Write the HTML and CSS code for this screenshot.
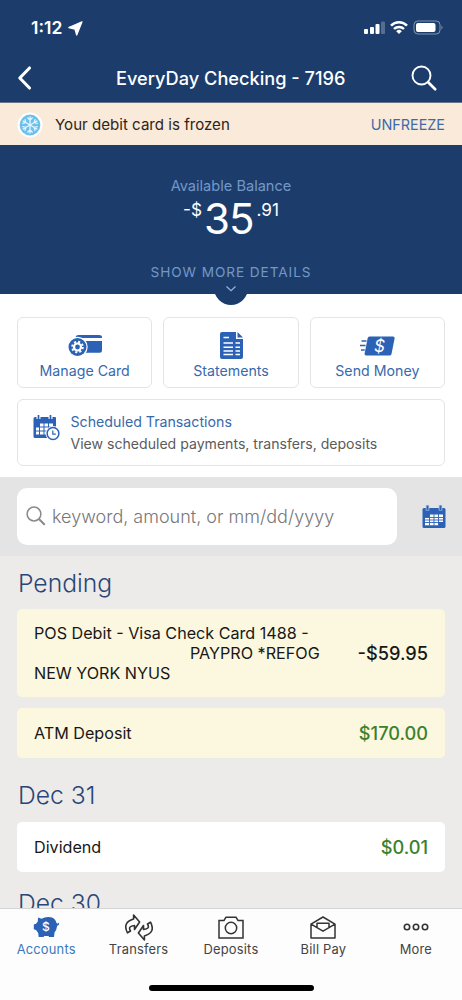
FILE: index.html
```html
<!DOCTYPE html>
<html lang="en">
<head>
<meta charset="utf-8">
<title>EveryDay Checking</title>
<link rel="stylesheet" href="styles.css">
</head>
<body>
<div class="screen">
  <header class="header">
    <div class="status">
      <span class="time">1:12</span>
      <svg class="locate" width="15" height="15" viewBox="0 0 15 15"><path d="M14 .8 8.700 14 7 8 .8 6.500Z" fill="#fff" stroke="#fff" stroke-width="1.300" stroke-linejoin="round"/></svg>
      <svg class="signals" width="82" height="16" viewBox="0 0 82 16">
        <g fill="#fff"><rect x="1" y="9" width="4" height="5" rx="1"/><rect x="7" y="7" width="4" height="7" rx="1"/><rect x="12.500" y="4" width="4" height="10" rx="1"/><rect x="18" y="1.500" width="4" height="12.500" rx="1" opacity=".25"/></g>
        <g fill="none" stroke="#fff" stroke-width="2.500"><path d="M28 5.600a11 11 0 0 1 16 0"/><path d="M31 9a7 7 0 0 1 10 0"/></g>
        <path d="M33.200 11.200a4 4 0 0 1 5.600 0L36 14Z" fill="#fff"/>
        <rect x="51" y="1" width="26" height="13" rx="3.800" fill="none" stroke="#fff" opacity=".45"/>
        <rect x="53" y="3" width="19.500" height="9" rx="2" fill="#fff"/>
        <path d="M78.500 5.500q2 2 0 4Z" fill="#fff" opacity=".5"/>
      </svg>
    </div>
    <div class="nav">
      <svg width="16" height="26" viewBox="0 0 16 26"><path d="M13.500 3 3.800 13 13.500 23" fill="none" stroke="#fff" stroke-width="3.100" stroke-linecap="round" stroke-linejoin="round"/></svg>
      <h1 class="title">EveryDay Checking - 7196</h1>
      <svg width="28" height="28" viewBox="0 0 28 28" fill="none" stroke="#fff" stroke-linecap="round"><circle cx="11.500" cy="11.500" r="9" stroke-width="1.900"/><path d="m18.200 18.200 7 7" stroke-width="2.700"/></svg>
    </div>
  </header>

  <div class="banner">
    <svg width="26" height="26" viewBox="0 0 26 26"><circle cx="13" cy="13" r="12.500" fill="#fff"/><circle cx="13" cy="13" r="10.400" fill="#6dbfec"/>
      <g stroke="#e6f6ff" stroke-width="1.300" stroke-linecap="round" fill="none">
        <g id="arm"><path d="M13 13V5M10.800 6 13 8.200l2.200-2.200"/></g>
        <use href="#arm" transform="rotate(60 13 13)"/><use href="#arm" transform="rotate(120 13 13)"/><use href="#arm" transform="rotate(180 13 13)"/><use href="#arm" transform="rotate(240 13 13)"/><use href="#arm" transform="rotate(300 13 13)"/>
      </g></svg>
    <span class="banner-text">Your debit card is frozen</span>
    <a class="unfreeze">UNFREEZE</a>
  </div>

  <section class="balance">
    <div class="notch"><svg width="12" height="8" viewBox="0 0 12 8"><path d="m1.500 1.500 4.500 4.200 4.500-4.200" fill="none" stroke="#8fb4e0" stroke-width="1.300"/></svg></div>
    <div class="balance-label">Available Balance</div>
    <div class="amount"><span class="minor sign">-$</span><span class="major">35</span><span class="minor">.91</span></div>
    <div class="more">SHOW MORE DETAILS</div>
  </section>

  <section class="actions">
    <div class="tiles">
      <div class="tile">
        <svg width="34" height="24" viewBox="0 0 34 24"><path d="M7.500 3.200Q8 1 10.500 1H31q3 0 3 2.200V4H7.500ZM7.500 7H34v9.500q0 2.200-2.200 2.200H14Z" fill="#2b62b5"/><circle cx="9.500" cy="13" r="10.200" fill="#fff"/><circle cx="9.500" cy="13" r="9" fill="#2b62b5"/><circle cx="9.500" cy="13" r="3.500" fill="none" stroke="#fff" stroke-width="2.200"/><circle cx="9.500" cy="13" r="5.300" fill="none" stroke="#fff" stroke-width="2" stroke-dasharray="2.080 2.080"/></svg>
        <span class="tile-label">Manage Card</span>
      </div>
      <div class="tile">
        <svg class="sheet" width="23" height="27" viewBox="0 0 23 27"><path d="M2 0h14v7h7v18q0 2-2 2H2q-2 0-2-2V2Q0 0 2 0ZM17.500 0 23 5.500h-5.500Z" fill="#2b62b5"/><path d="M3.500 5.500H9M3.500 11H13M3.500 15.200H13M3.500 19H13M3.500 22.500H13M15.500 11H20M15.500 15.200H20M15.500 19H20M15.500 22.500H20" stroke="#fff" stroke-width="1.500"/></svg>
        <span class="tile-label">Statements</span>
      </div>
      <div class="tile">
        <svg width="35" height="20" viewBox="0 0 35 20"><path d="M9.500.5H33q2 0 1.600 2L31.500 18q-.4 1.500-2 1.500H6.200q-2 0-1.600-2L7.700 2q.4-1.500 1.800-1.500Z" fill="#2b62b5"/><path d="M1.500 5h5M0 9.500h5.500M1 14h3.700" stroke="#2b62b5" stroke-width="1.500"/><text class="cash" x="19.500" y="15.500" text-anchor="middle">$</text></svg>
        <span class="tile-label">Send Money</span>
      </div>
    </div>
    <div class="scheduled">
      <svg width="28" height="28" viewBox="0 0 28 28"><path d="M2 3h20q1 0 1 1v9a8 8 0 0 0-8 11H2q-1.500 0-1.500-1.500V4.500Q.5 3 2 3Z" fill="#2b62b5"/><path d="M5.500 0v5M17.500 0v5" stroke="#fff" stroke-width="4"/><path d="M5.500 1v4M17.500 1v4" stroke="#2b62b5" stroke-width="1.700"/><path d="M6.500 9.500H20V13h-3l-2 3v4.500H3V13h3.500Z" fill="#fff"/><path d="M6.500 9v12M11 9v12M15.500 9v7M2.500 13H20M2.500 17H15" stroke="#2b62b5" stroke-width="1"/><circle cx="20" cy="19.500" r="7.500" fill="#fff"/><circle cx="20" cy="19.500" r="5.900" fill="none" stroke="#2b62b5" stroke-width="1.500"/><path d="M19.800 16.500v3.700h3" fill="none" stroke="#2b62b5" stroke-width="1.200"/></svg>
      <div class="scheduled-copy"><div class="scheduled-title">Scheduled Transactions</div><div class="scheduled-sub">View scheduled payments, transfers, deposits</div></div>
    </div>
  </section>

  <section class="search">
    <div class="field">
      <svg width="20" height="20" viewBox="0 0 20 20" fill="none" stroke="#8a8a8c" stroke-linecap="round"><circle cx="8" cy="8" r="6.900" stroke-width="1.500"/><path d="m13.200 13.200 5 5" stroke-width="2"/></svg>
      <span class="placeholder">keyword, amount, or mm/dd/yyyy</span>
    </div>
    <svg class="calendar" width="24" height="24" viewBox="0 0 24 24"><path d="M2 3h20q1.500 0 1.500 1.500v17q0 1.500-1.500 1.500H2Q.5 23 .5 21.500v-17Q.5 3 2 3Z" fill="#2b62b5"/><path d="M5.500 0v5.500M18.500 0v5.500" stroke="#b9cbe6" stroke-width="3.600"/><path d="M5.500.5V5M18.500.5V5" stroke="#2b62b5" stroke-width="2"/><path d="M7.500 9.500H21v7.500h-4.500v3.200H3V12.500h4.500Z" fill="#fff"/><path d="M7.500 9v11.500M12 9v11.500M16.500 9v11.500M3 12.500h18M3 15h18M3 17.500h14" stroke="#2b62b5" stroke-width=".9"/></svg>
  </section>

  <main class="list">
    <h2 class="date">Pending</h2>
    <div class="row pending tall"><div class="desc">POS Debit - Visa Check Card 1488 -<br><span class="payee">PAYPRO *REFOG</span><br>NEW YORK NYUS</div><span class="value">-$59.95</span></div>
    <div class="row pending"><div class="desc">ATM Deposit</div><span class="value credit">$170.00</span></div>
    <h2 class="date later">Dec 31</h2>
    <div class="row"><div class="desc">Dividend</div><span class="value credit">$0.01</span></div>
    <h2 class="date last">Dec 30</h2>
  </main>

  <footer class="tabs">
    <nav class="tab-row">
      <div class="tab active">
        <svg width="27" height="22" viewBox="0 0 27 22"><path d="M5 1.500 8.500 2.800Q13 .2 18 1.300q4.500 1.200 5.500 5.700l1.300.8 1.200-1.200q.8 2.400-1.800 3.200Q23.500 14.500 21.500 16.500l-.5 4.500h-5l-.5-1H11L10.700 21h-5l-.5-4L3 14 .8 13.200V8.500L3 7.700l1.800-2.200Z" fill="#2b62b5"/><text class="pig-mark" x="13" y="14.500" text-anchor="middle">$</text></svg>
        <span>Accounts</span>
      </div>
      <div class="tab">
        <svg width="28" height="27" viewBox="0 0 28 27" fill="none" stroke="#333" stroke-width="1.600" stroke-linejoin="round"><path id="swap" d="M2.500 18.800Q-3 8.500 8.600 5V1L14.600 8 9.500 15.500V11.500Q2.500 12 5.500 17Z"/><use href="#swap" transform="rotate(180 14 13.500)"/></svg>
        <span>Transfers</span>
      </div>
      <div class="tab">
        <svg width="26" height="23" viewBox="0 0 26 23" fill="none" stroke="#333" stroke-width="1.500"><path d="M1 4.500h5L8 1.200h10l2 3.300h5V22H1Z"/><circle cx="13" cy="12" r="5.700"/></svg>
        <span>Deposits</span>
      </div>
      <div class="tab">
        <svg width="26" height="23" viewBox="0 0 26 23" fill="none" stroke="#333" stroke-width="1.500" stroke-linejoin="round"><path d="M1 8.200 13 1l12 7.200V22H1ZM1 8.200l12 7 12-7M7 11.500V7.200h12v4.300"/></svg>
        <span>Bill Pay</span>
      </div>
      <div class="tab">
        <svg width="26" height="8" viewBox="0 0 26 8" fill="none" stroke="#333" stroke-width="1.600"><circle cx="4" cy="4" r="2.700"/><circle cx="13" cy="4" r="2.700"/><circle cx="22" cy="4" r="2.700"/></svg>
        <span>More</span>
      </div>
    </nav>
    <div class="home"></div>
  </footer>
</div>
</body>
</html>
```
FILE: styles.css
```css
* { box-sizing: border-box; }
body { margin: 0; font-family: Inter, "Liberation Sans", sans-serif; color: #171717; }
svg { display: block; flex: none; }
h1, h2 { margin: 0; }
.screen { width: 462px; height: 1000px; display: flex; flex-direction: column; overflow: hidden; background: #edebea; white-space: nowrap; }
.header { height: 102px; background: #1c3d6c; color: #fff; flex: none; }
.status { height: 56px; padding: 0 17px 0 31px; display: flex; align-items: center; }
.time { font-size: 17.5px; font-weight: 600; line-height: 20px; }
.locate { margin-left: 6px; }
.signals { margin-left: auto; }
.nav { height: 43px; padding: 0 24px 0 16px; display: flex; align-items: center; }
.title { flex: 1; padding-left: 84px; font-size: 18.2px; font-weight: 500; line-height: 24px; padding-top: 1px; }
.banner { height: 43px; flex: none; border-top: 1px solid #657489; background: #f9ead9; padding: 1px 17px 0 17px; display: flex; align-items: center; }
.banner-text { margin-left: 12px; font-size: 15.100px; color: #30241a; }
.unfreeze { margin-left: auto; font-size: 14.400px; color: #3b6bab; }
.balance { height: 149px; flex: none; background: #1c3d6c; color: #7398c8; display: flex; flex-direction: column; align-items: center; padding-top: 31px; position: relative; }
.balance-label { font-size: 14.600px; line-height: 20px; font-weight: 400; }
.amount { height: 50px; display: flex; align-items: flex-start; color: #fff; }
.major { font-size: 42px; line-height: 46px; font-weight: 400; letter-spacing: -1px; margin: 0 3px 0 2px; }
.minor { font-size: 17.200px; line-height: 28px; font-weight: 400; }
.more { margin-top: 16px; font-size: 13.600px; line-height: 20px; letter-spacing: .95px; font-weight: 400; position: relative; }
.notch { position: absolute; bottom: -11px; left: 214px; width: 34px; height: 34px; border-radius: 50%; background: #1c3d6c; display: flex; justify-content: center; padding-top: 14px; }
.actions { height: 183px; flex: none; background: #fff; padding: 23px 17px 0; }
.tiles { display: grid; grid-template-columns: 1fr 1fr 1fr; gap: 11px; }
.tile { height: 71px; border: 1px solid #e4e4e6; border-radius: 6px; display: grid; grid-template-rows: 40px 20px; justify-items: center; align-items: center; padding-top: 3px; }
.tile svg { margin-top: 10px; }
.tile .sheet { margin: 8px 0 0 1px; }
.tile-label { font-size: 14.200px; line-height: 20px; color: #3869ad; }
.cash { font: 17px Inter, sans-serif; fill: #fff; font-style: italic; }
.scheduled { height: 67px; margin-top: 11px; border: 1px solid #e4e4e6; border-radius: 6px; display: flex; padding: 11px 15px; }
.scheduled svg { margin-top: 3px; }
.scheduled-copy { margin-left: 9.500px; }
.scheduled-title { font-size: 14.200px; line-height: 22px; color: #3869ad; }
.scheduled-sub { font-size: 14.080px; line-height: 22px; color: #5b5b5b; }
.search { height: 79px; flex: none; background: #e4e4e4; padding: 11px 16px 12px 17px; display: flex; align-items: center; justify-content: space-between; }
.calendar { margin-top: 1px; }
.field { width: 380px; height: 57px; background: #fff; border-radius: 10px; display: flex; align-items: center; padding-left: 9px; }
.placeholder { margin-left: 6px; font-size: 18px; font-weight: 300; color: #77777a; }
.list { height: 352px; flex: none; overflow: hidden; padding: 11px 17px 0; }
.date { font-size: 24.700px; line-height: 32px; height: 42px; font-weight: 300; color: #284777; padding-left: 1px; }
.row { height: 50px; margin-bottom: 11px; background: #fff; border-radius: 5px; padding: 0 17px; display: flex; align-items: center; justify-content: space-between; }
.later { margin-top: 21px; height: 43px; }
.last { margin-top: 15px; }
.tall { height: 88px; }
.pending { background: #fcf7df; }
.desc { font-size: 16.150px; line-height: 20px; }
.payee { margin-left: 156px; }
.value { font-size: 18.200px; font-weight: 500; }
.credit { color: #3b812c; }
.tabs { height: 92px; flex: none; background: #fdfdfd; border-top: 1px solid #d4d4d4; position: relative; display: flex; flex-direction: column; align-items: center; justify-content: space-between; padding-bottom: 9px; }
.tab-row { width: 462px; display: grid; grid-template-columns: repeat(5, 1fr); }
.tab { display: grid; grid-template-rows: 36px 10px; align-items: center; justify-items: center; font-size: 12.900px; line-height: 10px; color: #444; letter-spacing: .2px; }
.active { color: #3c79bd; }
.pig-mark { font: 500 12px Inter, sans-serif; fill: #fff; letter-spacing: 0; }
.home { width: 165px; height: 6px; border-radius: 3px; background: #000; }
```
